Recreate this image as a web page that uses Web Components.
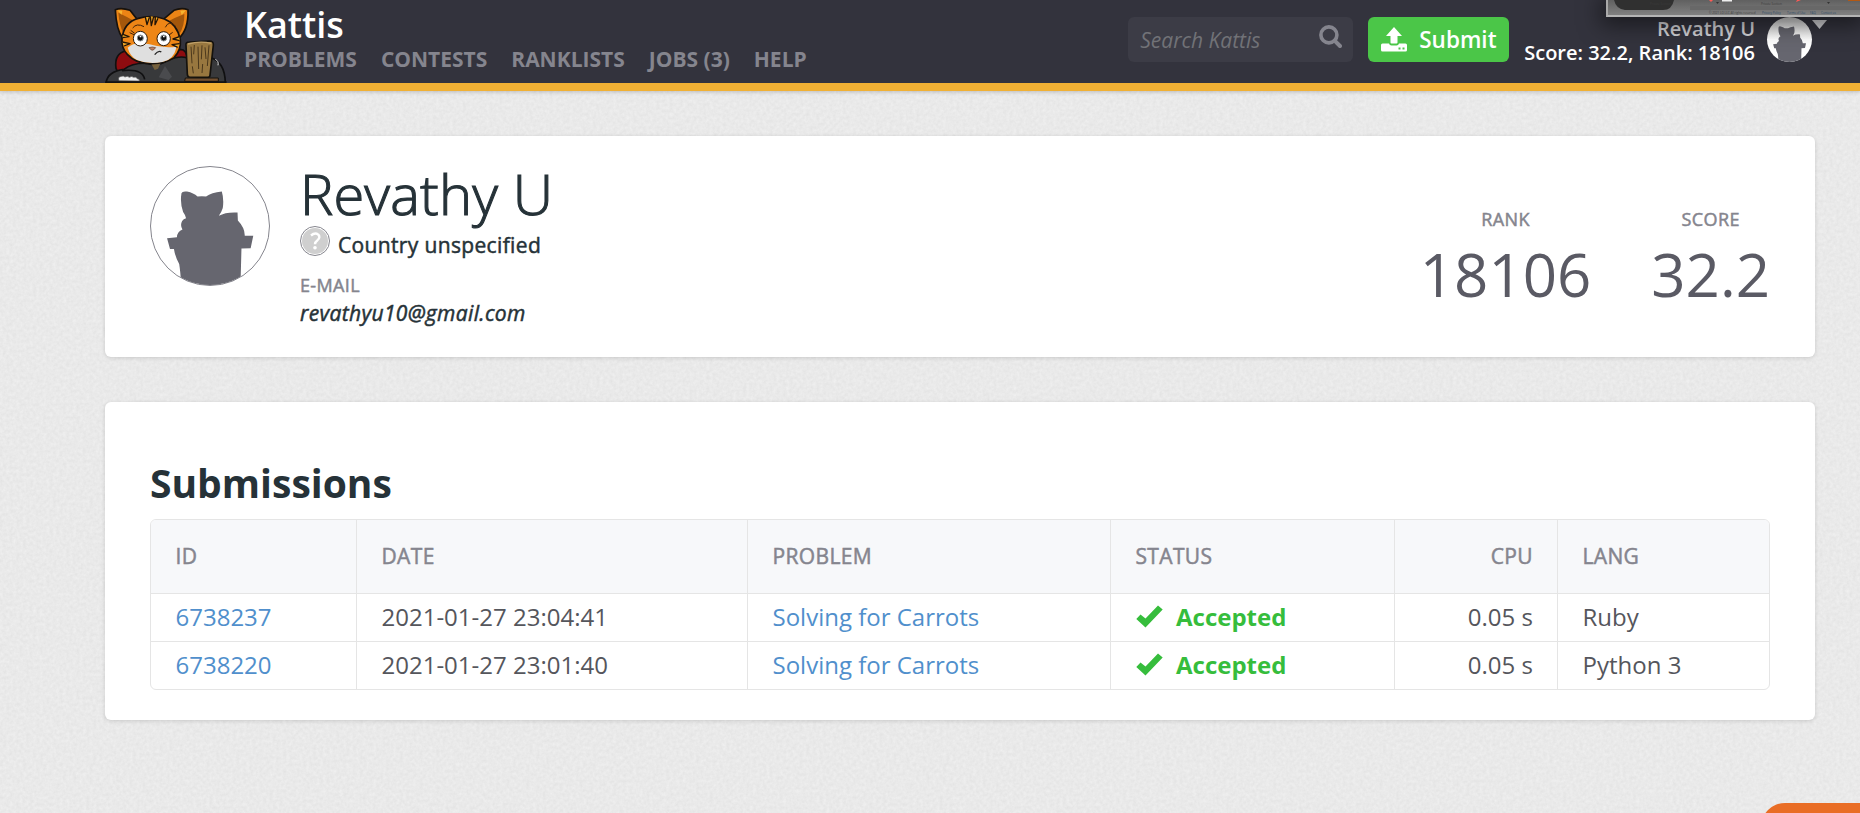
<!DOCTYPE html>
<html lang="en">
<head>
<meta charset="utf-8">
<title>Revathy U – Kattis</title>
<style>
html,body{margin:0;height:100%;overflow:hidden}
body{background:#e9e9e9;font-family:"Open Sans","Noto Sans",sans-serif;color:#263238}
</style>
</head>
<body>
<kattis-page></kattis-page>
<script>
const define=(name,html)=>{
  const t=document.createElement('template');
  t.innerHTML=html;
  customElements.define(name,class extends HTMLElement{
    constructor(){super();this.attachShadow({mode:'open'}).append(t.content.cloneNode(true));}
  });
};

define('paper-texture',`
<style>:host{display:block;position:absolute;inset:0;z-index:-1}svg{display:block;width:100%;height:100%}</style>
<svg><filter id="n" x="0" y="0" width="100%" height="100%" color-interpolation-filters="sRGB">
<feTurbulence type="fractalNoise" baseFrequency=".3" numOctaves="3" seed="4"/>
<feColorMatrix values=".06 0 0 0 .885  .06 0 0 0 .885  .06 0 0 0 .885  0 0 0 0 1"/></filter>
<rect width="100%" height="100%" filter="url(#n)"/></svg>`);

define('kattis-avatar',`
<style>:host{display:block;box-sizing:border-box;border-radius:50%;overflow:hidden;background:#fff;border:1px solid #85858d}
svg{display:block;width:100%;height:100%}</style>
<svg viewBox="0 0 360 360"><path fill="#66666f" d="M93 80Q95 73 110 75Q130 79 142 90Q155 88 168 90Q184 78 216 75Q223 98 219 125Q215 138 207 149Q228 137 264 139L265 163Q287 186 286 210L312 210L304 248L276 249L273 360L92 360Q90 320 86 296Q74 275 70 250L58 250L49 217L79 214Q80 198 96 191Q88 178 95 165Q99 158 107 156Q106 148 98 137Q88 110 93 80Z"/></svg>`);

define('kattis-mascot',`
<style>:host{display:block;width:130px;height:83px}svg{display:block}</style>
<svg width="130" height="83" viewBox="0 0 390 249" stroke-linejoin="round">
<path d="M48 205Q42 160 78 153L160 160 240 148Q262 148 262 180L250 215 60 230Z" fill="#8e0c10" stroke="#111" stroke-width="5"/>
<path d="M18 249Q22 214 72 208Q98 188 140 190Q170 202 205 180Q240 166 262 174L330 172Q375 185 376 249Z" fill="#38393b" stroke="#101011" stroke-width="5"/>
<path d="M176 232L195 198 216 230 206 240Z" fill="#4a4b4e"/><path d="M154 192l28-2-8 16-10 4z" fill="#76613d"/>
<path d="M66 212Q128 205 134 238" fill="none" stroke="#101011" stroke-width="5"/>
<path d="M46 29Q64 22 90 31L110 56 68 114Q49 90 46 29Z" fill="#ec8415" stroke="#17120d" stroke-width="5"/>
<path d="M55 38Q88 54 98 60L70 100Q58 75 55 38Z" fill="#a4570b"/>
<path d="M264 29Q244 22 222 31L190 58 235 116Q266 90 264 29Z" fill="#ec8415" stroke="#17120d" stroke-width="5"/>
<path d="M253 42Q224 53 205 64L237 104Q254 80 253 42Z" fill="#a4570b"/>
<path d="M52 31l15 1-2 12zM258 31l-17 1 4 13z" fill="#f6b630"/>
<path d="M66 116Q72 66 115 55Q155 43 193 57Q232 72 241 120Q244 150 222 173Q195 192 150 191Q106 190 82 163Q64 145 66 116Z" fill="#ee8616" stroke="#17120d" stroke-width="5"/>
<path d="M83 143Q104 124 149 133Q190 146 230 140Q221 180 187 186Q145 194 111 180Q90 169 83 143Z" fill="#dfdfdf"/>
<path d="M136 51l5 23 7-22M151 49l3 28 7-27M166 51l-1 23 9-19" stroke="#211407" stroke-width="4" fill="#f5ad28"/>
<path d="M69 103l18 7-20 3M67 126l23 5-18 7M238 110l-19 7 20 5M239 131l-23 3 17 8" fill="#f4aa27" stroke="#211407" stroke-width="4"/>
<path d="M89 98l15 7M92 91l12 9M218 97l-11 8M196 82Q207 58 228 80M98 84Q110 68 132 80" fill="none" stroke="#44230a" stroke-width="3"/>
<ellipse cx="121" cy="116" rx="21" ry="22" fill="#fff" stroke="#2b1b0b" stroke-width="3"/><ellipse cx="191" cy="116" rx="20" ry="21" fill="#fff" stroke="#2b1b0b" stroke-width="3"/>
<circle cx="121" cy="114" r="9" fill="#111" stroke="#8b9190" stroke-width="3"/><circle cx="191" cy="114" r="9" fill="#111" stroke="#8b9190" stroke-width="3"/><path d="M119 107h5v5h-5zM189 107h5v5h-5z" fill="#fff"/>
<path d="M147 143q10-4 20 0-8 11-13 7z" fill="#c08161" stroke="#5a3b2c" stroke-width="2"/><path d="M164 164Q175 150 184 156" fill="none" stroke="#222" stroke-width="4"/>
<path d="M57 242q-5-12 8-13 5-3 10 2 7-5 13 1 7-5 13 0 7-3 11 4 7 0 6 7z" fill="#eee" stroke="#555" stroke-width="2"/>
<path d="M346 178q11 5 8 18" stroke="#ddd" stroke-width="3" fill="none"/>
<path d="M258 136Q256 126 268 126L328 123Q341 123 340 135L330 226Q330 232 323 232L268 231Q262 230 262 222Z" fill="#98773f" stroke="#15120d" stroke-width="5"/>
<path d="M264 132Q300 122 334 130" stroke="#c0a067" stroke-width="4" fill="none"/>
<path d="M273 140l3 50M283 135l-2 28M294 140l2 67M306 136l-2 42M315 142l3 35M327 136l-5 62M277 199l3 21M308 192l-2 27" stroke="#4b381c" stroke-width="3" fill="none"/>
<path d="M256 234h99v10H254z" fill="#735030" stroke="#15120d" stroke-width="3"/>
<path d="M16 246H380" stroke="#121212" stroke-width="5"/></svg>`);

define('nav-link',`
<style>:host{display:block;font-weight:700;font-size:21px;line-height:24px;color:#85858e;white-space:nowrap}</style><slot></slot>`);

define('search-box',`
<style>:host{display:flex;align-items:center;justify-content:space-between;box-sizing:border-box;width:225px;height:45px;padding:0 11px 0 12px;border-radius:6px;background:#3c3c46;color:#717277;font-size:21px;font-style:italic;line-height:30px}
svg{display:block;margin-top:-7px}</style>
<span><slot></slot></span>
<svg width="23" height="23" viewBox="0 0 23 23" fill="none" stroke="#85858e"><circle cx="9.9" cy="9.9" r="8" stroke-width="3.600"/><path d="M15.6 15.6L21 21" stroke-width="4" stroke-linecap="round"/></svg>`);

define('submit-button',`
<style>:host{display:flex;align-items:center;box-sizing:border-box;width:141px;height:45px;padding-left:13px;gap:12px;border-radius:6px;background:#4bc648;color:#fff;font-weight:600;font-size:22.5px;line-height:32px}
span{margin-top:1px}svg{display:block;margin-top:-1px}</style>
<svg width="26" height="25" viewBox="0 0 26 25"><path fill="#fff" d="M13 0L21 9H16.500V15.500Q16.500 16.500 15.500 16.500H10.500Q9.500 16.500 9.500 15.500V9H5ZM1.500 16.500H8Q8.500 18.500 10.500 18.500H15.500Q17.500 18.500 18 16.500H24.500Q26 16.500 26 18V23Q26 24.500 24.500 24.500H1.500Q0 24.500 0 23V18Q0 16.500 1.500 16.500Z"/><path fill="#4bc648" d="M17.500 20.500h2v2h-2zM21.500 20.500h2v2h-2z"/></svg>
<span><slot></slot></span>`);

define('user-menu',`
<style>:host{display:flex;align-items:flex-start;text-align:right;font-weight:600;font-size:20px;line-height:24px;color:#fff;white-space:nowrap}
.t{padding-top:17px}.n{color:#d2d2d6}kattis-avatar{width:45px;height:45px;margin:17px 0 0 12px;border:0;background:linear-gradient(#ccc,#fff 50%)}
svg{display:block;margin-top:20px}</style>
<div class="t"><div class="n"><slot name="name"></slot></div><div><slot></slot></div></div>
<kattis-avatar></kattis-avatar><svg width="15" height="9"><path fill="#d0d0d3" d="M0 0H15L7.500 9Z"/></svg>`);

define('site-header',`
<style>:host{display:flex;box-sizing:border-box;height:91px;padding:0 33px 0 100px;background:#33333d;border-bottom:8px solid #f0b034;box-shadow:0 1px 4px rgba(0,0,0,.2)}
.m{margin-left:14px;padding-top:4px;flex:1}.b{font-weight:600;font-size:36px;line-height:42px;color:#fff}
nav{display:flex;gap:24px;margin-top:1px}search-box,submit-button{margin-top:17px}submit-button{margin-left:15px}user-menu{margin-left:15px}</style>
<kattis-mascot></kattis-mascot>
<div class="m"><div class="b">Kattis</div><nav><nav-link>PROBLEMS</nav-link><nav-link>CONTESTS</nav-link><nav-link>RANKLISTS</nav-link><nav-link>JOBS (3)</nav-link><nav-link>HELP</nav-link></nav></div>
<search-box>Search Kattis</search-box><submit-button>Submit</submit-button>
<user-menu><span slot="name">Revathy U</span>Score: 32.2, Rank: 18106</user-menu>`);

define('content-card',`
<style>:host{display:block;box-sizing:border-box;background:#fff;border-radius:6px;box-shadow:0 1px 4px rgba(0,0,0,.14);padding:0 45px}</style><slot></slot>`);

define('stat-block',`
<style>:host{display:block;text-align:center}
.l{-webkit-text-stroke:.5px;letter-spacing:.4px;font-size:18px;line-height:24px;color:#85858e}.v{font-size:60px;line-height:70px;color:#5a5a64;margin-top:8px}</style>
<div class="l"><slot name="label"></slot></div><div class="v"><slot></slot></div>`);

define('user-profile',`
<style>:host{display:flex;height:221px}
.a{width:120px;height:120px;margin-top:30px}.i{margin-left:30px;flex:1}
h1{margin:19px 0 0;font-weight:300;font-size:56px;line-height:76px;white-space:nowrap;-webkit-text-stroke:1.1px;letter-spacing:.15px}
.c{display:flex;align-items:flex-start;margin-top:-5px;font-size:21px}.c span{line-height:32px;margin:3px 0 0 8px}
.c,.l,.e{-webkit-text-stroke:.5px;letter-spacing:.35px}
svg{display:block}
.l{font-size:18px;line-height:24px;color:#85858e;margin-top:12px}
.e{font-size:21px;line-height:28px;font-style:italic;margin-top:2px}
.s{display:flex;gap:60px;padding-top:71px}</style>
<kattis-avatar class="a"></kattis-avatar>
<div class="i"><h1>Revathy U</h1>
<div class="c"><svg width="30" height="30" viewBox="0 0 30 30"><circle cx="15" cy="15" r="14.500" fill="#fff" stroke="#85858d" stroke-width="1"/><circle cx="15" cy="15" r="13" fill="#cfcfcf"/><path d="M11 9.500Q15 6.200 18.300 8.600Q20.800 11.400 17.500 14.200Q15 16 15 18.300" fill="none" stroke="#fff" stroke-width="2.400"/><circle cx="15" cy="21.800" r="1.800" fill="#fff"/></svg><span>Country unspecified</span></div>
<div class="l">E-MAIL</div><div class="e">revathyu10@gmail.com</div></div>
<div class="s"><stat-block><span slot="label">RANK</span>18106</stat-block><stat-block><span slot="label">SCORE</span>32.2</stat-block></div>`);

define('status-accepted',`
<style>:host{display:flex;align-items:center;gap:13.500px;color:#36bd3c;font-weight:700}svg{display:block}</style>
<svg width="27" height="23" viewBox="0 0 27 23"><path fill="#36bd3c" d="M.3 14L4.500 9.500 9.500 13.500 22 .5 26.700 4.500 9.500 22.500Z"/></svg><slot></slot>`);

define('submissions-table',`
<style>:host{display:block}h2{margin:0;padding-top:58px;font-size:39px;line-height:46px;font-weight:700}
table{width:1620px;margin-top:13px;table-layout:fixed;border-collapse:separate;border-spacing:0;border:1px solid #e5e5e5;border-radius:6px;overflow:hidden;font-size:24px;line-height:32px;color:#55565c}
th,td{box-sizing:border-box;padding:0 24px 2px 24.500px;text-align:left;height:48px;border-left:1px solid #e5e5e5;border-top:1px solid #e5e5e5;white-space:nowrap}
th{height:73px;border-top:0;background:#f7f8fa;font-size:21px;font-weight:400;-webkit-text-stroke:.5px;letter-spacing:.35px;color:#85858e}
th:first-child,td:first-child{border-left:0}a{color:#508fcc}.r{text-align:right}</style>
<h2>Submissions</h2>
<table><colgroup><col style="width:205px"><col style="width:391px"><col style="width:363px"><col style="width:284px"><col style="width:163px"><col></colgroup>
<tr><th>ID</th><th>DATE</th><th>PROBLEM</th><th>STATUS</th><th class="r">CPU</th><th>LANG</th></tr>
<tr><td><a>6738237</a></td><td>2021-01-27 23:04:41</td><td><a>Solving for Carrots</a></td><td><status-accepted>Accepted</status-accepted></td><td class="r">0.05 s</td><td>Ruby</td></tr>
<tr><td><a>6738220</a></td><td>2021-01-27 23:01:40</td><td><a>Solving for Carrots</a></td><td><status-accepted>Accepted</status-accepted></td><td class="r">0.05 s</td><td>Python 3</td></tr></table>`);

define('floating-preview',`
<style>:host{display:block;position:absolute;z-index:3;left:1606px;top:0;width:254px;height:17px;box-sizing:border-box;border-left:2px solid #a9a9a9;border-bottom:2px solid #b5b5b5;background:linear-gradient(#606060,#818181);box-shadow:0 3px 22px 5px rgba(0,0,0,.5)}
svg{display:block}</style>
<svg width="252" height="15" font-family="Open Sans,sans-serif" font-size="3" fill="#3c3c3c"><path d="M6 0H66Q64 10 55 10H17Q8 9 6 0Z" fill="#303030"/><path d="M82 6H252V10H82Z" fill="#686868"/>
<path d="M101 0h4l-2 2zM189 0h4l-5 2z" fill="#ff5a55"/><path d="M114 0h10v1.500h-10z" fill="#eee"/><path d="M240 0h12v1h-12z" fill="#b25813"/>
<path d="M108 2h3l-1.500 2zM219 2h3l-1.500 2z" fill="#333"/>
<text x="42" y="5.200">Private Section</text><text x="153" y="5.200">Private Section</text><text x="101" y="14">© 2021 LO LLC All rights reserved</text>
<g fill="#2c4a68"><text x="154" y="14">Privacy Policy</text><text x="179" y="14">Terms of Use</text><text x="202" y="14">FAQ</text><text x="213" y="14">Contact us</text></g></svg>`);

define('help-tab',`<style>:host{display:block;position:absolute;right:0;bottom:0;width:99px;height:10px;overflow:hidden}div{height:50px;border-radius:24px 0 0 0;background:#e96d25}</style><div></div>`);

define('kattis-page',`
<style>:host{display:block;position:relative;z-index:0;width:1860px;height:813px;overflow:hidden}
main{padding:45px 45px 0 105px}.sub{margin-top:45px;height:318px}</style>
<paper-texture></paper-texture><site-header></site-header>
<main><content-card><user-profile></user-profile></content-card><content-card class="sub"><submissions-table></submissions-table></content-card></main>
<floating-preview></floating-preview><help-tab></help-tab>`);
</script>
</body>
</html>
